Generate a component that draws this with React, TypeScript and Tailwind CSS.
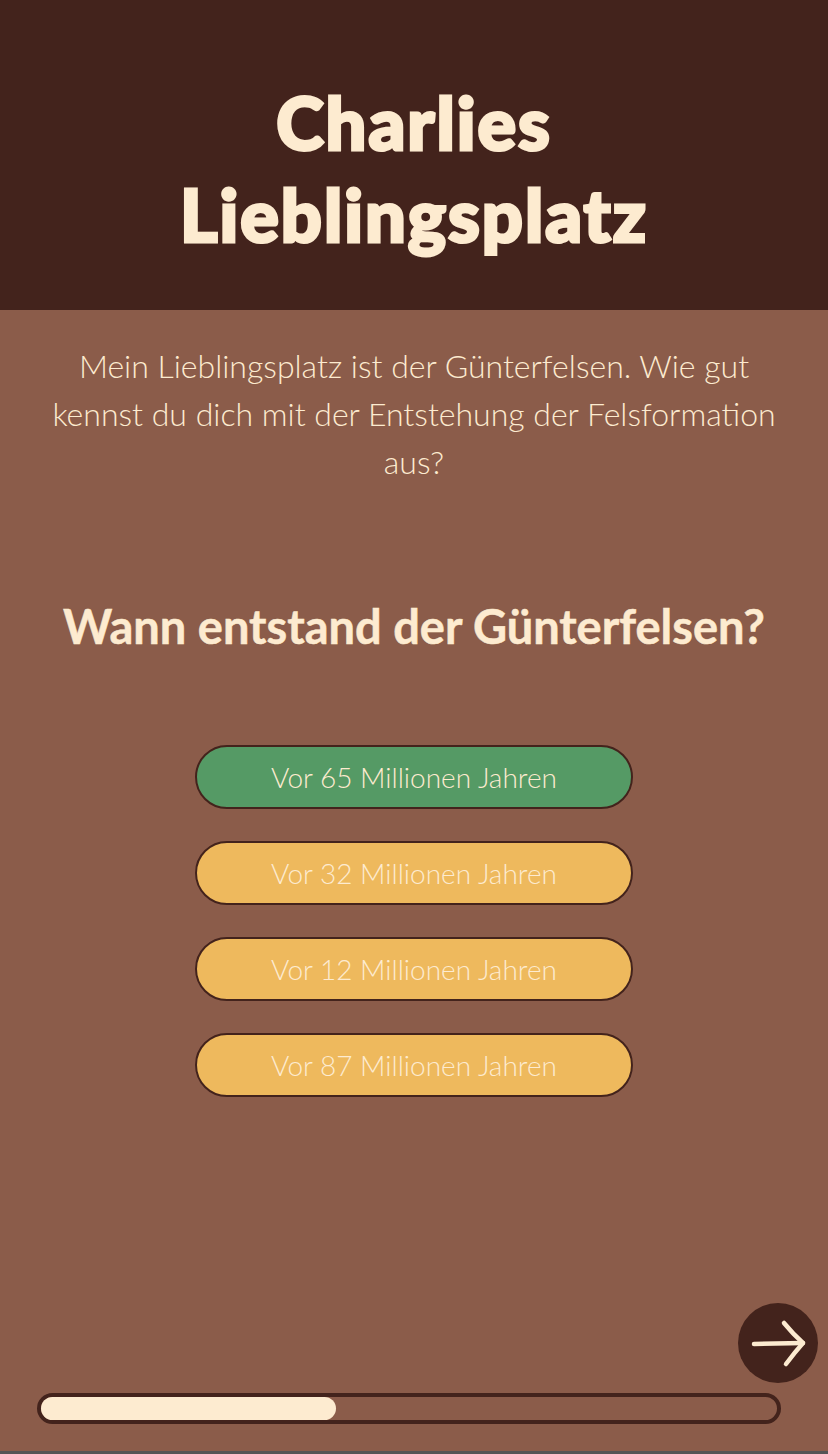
import React from "react";

const options = [
  { label: "Vor 65 Millionen Jahren", correct: true },
  { label: "Vor 32 Millionen Jahren", correct: false },
  { label: "Vor 12 Millionen Jahren", correct: false },
  { label: "Vor 87 Millionen Jahren", correct: false },
];

export default function App() {
  return (
    <div className="w-[828px] h-[1454px] flex flex-col bg-[#8b5c4a] text-[#fdebd0] overflow-hidden" style={{ fontFamily: "Lato, 'Noto Sans', sans-serif" }}>
      <header className="h-[310px] shrink-0 bg-[#43231c] flex items-center justify-center">
        <h1 className="text-center font-black text-[72px] leading-[92px] tracking-[2px] mt-[26px] [-webkit-text-stroke:3px_#fdebd0]">
          Charlies
          <br />
          Lieblingsplatz
        </h1>
      </header>
      <main className="flex-1 flex flex-col items-center relative">
        <p className="mt-[32px] px-[46px] text-center font-light text-[32px] leading-[48px]">
          Mein Lieblingsplatz ist der Günterfelsen. Wie gut kennst du dich mit der Entstehung der Felsformation aus?
        </p>
        <h2 className="mt-[112px] text-center font-bold text-[47px] leading-[56px] [-webkit-text-stroke:0.5px_#fdebd0]">
          Wann entstand der Günterfelsen?
        </h2>
        <div className="mt-[91px] flex flex-col gap-[32px]">
          {options.map((o) => (
            <button
              key={o.label}
              className={`w-[438px] h-[64px] rounded-full border-2 border-[#43231c] text-[28px] font-light text-[#fdebd0] flex items-center justify-center ${o.correct ? "bg-[#559a65]" : "bg-[#eeb95d]"}`}
            >
              {o.label}
            </button>
          ))}
        </div>
        <div className="flex-1" />
        <div className="w-full flex justify-end pr-[10px]">
          <button className="w-[80px] h-[80px] rounded-full bg-[#43231c] flex items-center justify-center">
            <svg width="58" height="58" viewBox="0 0 58 58" fill="none" stroke="#fdebd0" strokeWidth="4.5" strokeLinecap="round" strokeLinejoin="round">
              <path d="M5 30 L54 29" />
              <path d="M35 9 Q44 20 54 29 Q46 38 37 50" />
            </svg>
          </button>
        </div>
        <div className="w-full px-[37px] mt-[10px] mb-[27px]">
          <div className="h-[31px] w-[744px] rounded-full border-[4px] border-[#43231c] p-0">
            <div className="h-full w-[295px] rounded-full bg-[#fdebd0]" />
          </div>
        </div>
      </main>
      <div className="h-[3px] shrink-0 bg-[#555555]" />
    </div>
  );
}
